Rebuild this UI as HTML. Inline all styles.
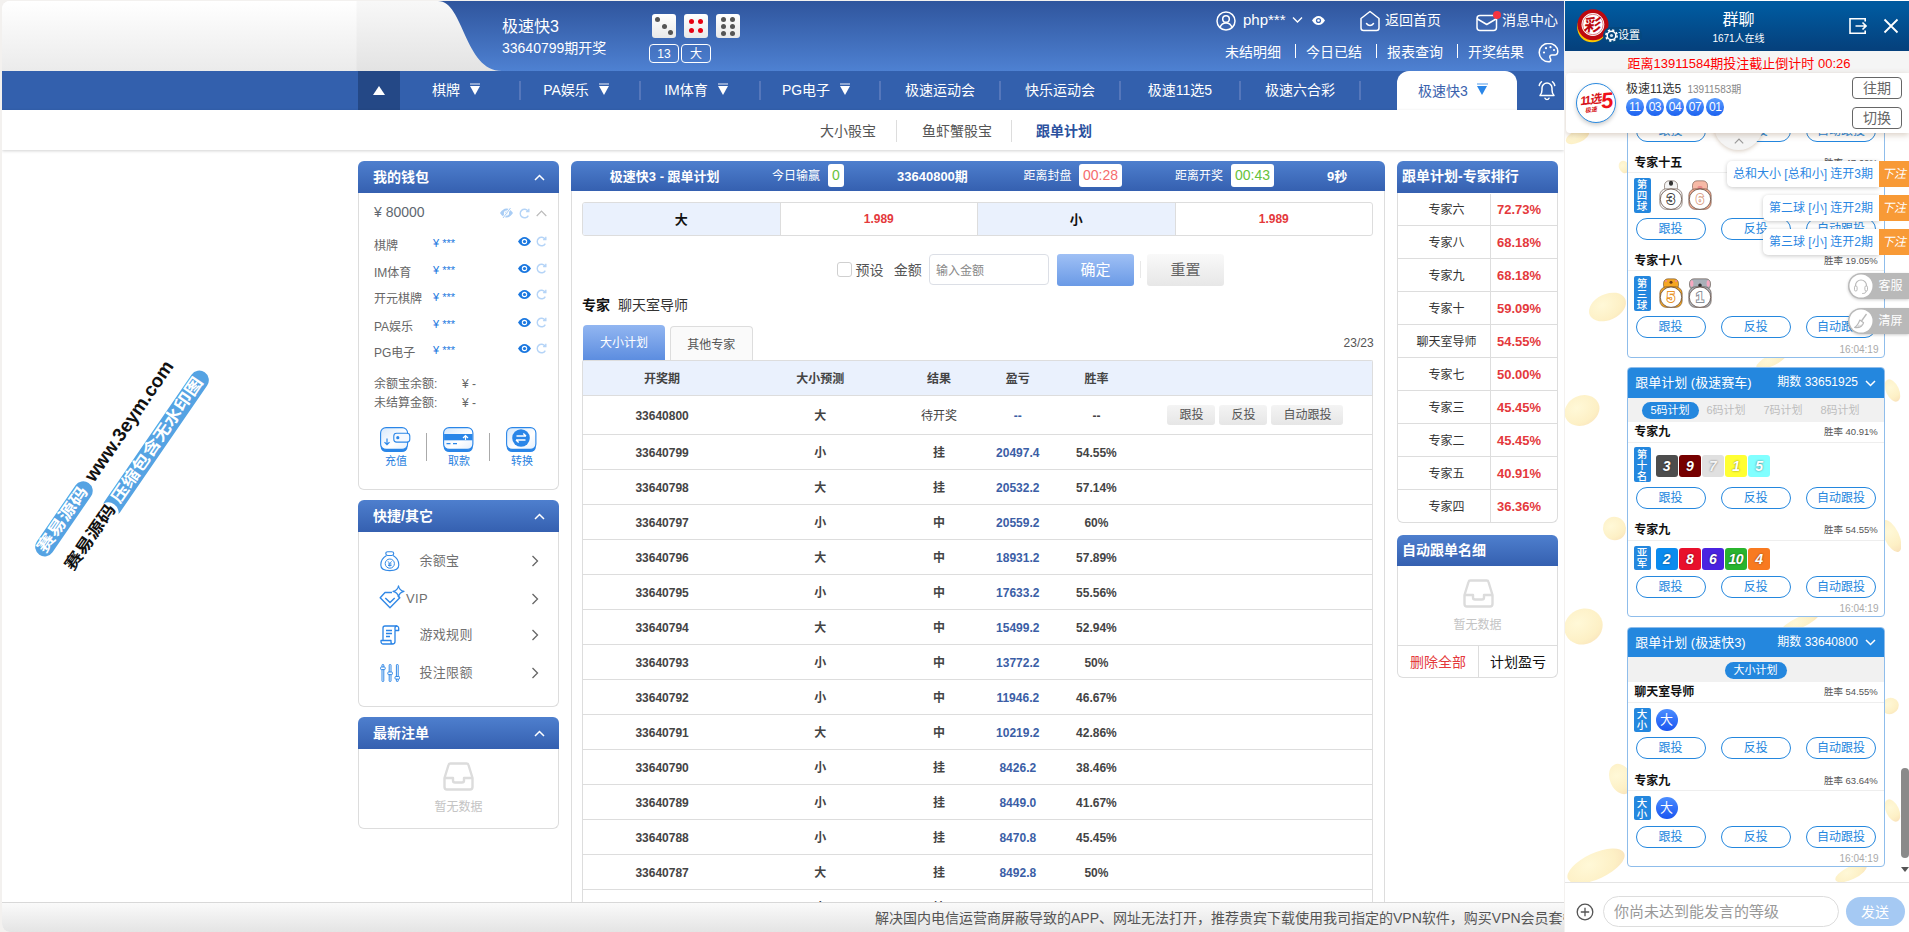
<!DOCTYPE html>
<html lang="zh-CN">
<head>
<meta charset="utf-8">
<title>极速快3 - 跟单计划</title>
<style>
*{box-sizing:border-box;margin:0;padding:0}
html,body{width:1909px;height:932px;overflow:hidden;background:#f3f1ef}
body{font-family:"Liberation Sans","Noto Sans CJK SC",sans-serif;font-size:12px;color:#333;position:relative}
.abs{position:absolute}
svg{display:block}
/* ---------- main frame ---------- */
#main{position:absolute;left:2px;top:1px;width:1562px;height:931px;background:#fff;border-radius:8px 0 0 8px;overflow:hidden}
#hdr{position:absolute;left:430px;top:0;width:1132px;height:70px;background:linear-gradient(#2f559d,#4e81d2)}
#hdrL{position:absolute;left:0;top:0;width:500px;height:70px}
#nav{position:absolute;left:0;top:70px;width:1562px;height:39px;background:#3360ad}
#nav .it{position:absolute;top:0;height:39px;width:120px;color:#fff;font-size:14px;line-height:39.500px;white-space:nowrap}
#nav .sep{position:absolute;top:10px;width:1.500px;height:19px;background:#5577bb}
.trn{display:block;position:relative;margin:14.500px 0 0 10px;width:0;height:0;border-left:5px solid transparent;border-right:5px solid transparent;border-top:9px solid #fff}
.trn:before{content:"";position:absolute;left:-5px;top:-11.5px;width:10px;height:2px;background:rgba(255,255,255,.45)}
.tri{position:absolute;top:13px;width:0;height:0;border-left:5.5px solid transparent;border-right:5.5px solid transparent;border-top:9px solid #fff}
.tri:before{content:"";position:absolute;left:-5.5px;top:-11.5px;width:11px;height:2px;background:rgba(255,255,255,.45)}
#subnav{position:absolute;left:0;top:109px;width:1562px;height:40px;background:#fff;box-shadow:0 1px 3px rgba(0,0,0,.18)}
#subnav span{position:absolute;top:0;line-height:42px;font-size:14px;color:#555;white-space:nowrap}
#subnav i{position:absolute;top:10px;width:1px;height:22px;background:#ddd}
#foot{position:absolute;left:0;top:901px;width:1562px;height:30px;background:linear-gradient(#fafafa,#e4e4e4);border-top:1px solid #d8d8d8;overflow:hidden}
#foot span{position:absolute;left:873px;top:0;line-height:31px;font-size:14px;color:#555;white-space:nowrap}
/* ---------- panels ---------- */
.ph{position:absolute;height:32px;background:linear-gradient(#4e7fce,#3560b0);border-radius:6px 6px 0 0;color:#fff;font-weight:bold;font-size:14px;line-height:32px;white-space:nowrap}
.pb{position:absolute;background:#fff;border:1px solid #ddd;border-top:0;border-radius:0 0 6px 6px}
/* ---------- chat ---------- */
#chat{position:absolute;left:1565px;top:0;width:344px;height:932px;background:#fff;overflow:hidden}

#chat{font-family:"Liberation Sans","Noto Sans CJK SC",sans-serif}
#chd{position:absolute;left:0;top:1px;width:344px;height:49.600px;background:linear-gradient(#005a9f 10%,#05417d 95%);color:#fff}
#ccd{position:absolute;left:0;top:50.600px;width:344px;height:22px;background:#f5f5f5;color:#f00;font-size:13px;line-height:25px;text-align:center;white-space:nowrap;padding-left:4px}
#clt{position:absolute;left:1px;top:73px;width:343px;height:60.400px;background:#fff;border-radius:4px 0 0 4px;box-shadow:0 2px 6px rgba(120,80,40,.28)}
.ball{position:absolute;top:25px;width:17.500px;height:17.500px;border-radius:50%;background:linear-gradient(#5c9dff,#1c62f0);color:#fff;font-size:12px;line-height:18.500px;text-align:center;letter-spacing:-.5px}
.cbtn{position:absolute;left:286px;width:50px;height:22px;border:1px solid #666;border-radius:4px;color:#666;font-size:14px;line-height:21px;text-align:center;background:#fff}
#cmsg{position:absolute;left:0;top:73px;width:344px;height:809px;overflow:hidden;background:#fff}
#cin{position:absolute;left:0;top:882px;width:344px;height:50px;background:#fff;border-top:1px solid #e4e4e4}
.coin{position:absolute;border-radius:50%;background:radial-gradient(circle at 40% 35%,#fff2b0,#fbe18c 62%,#f2c274);opacity:.5;transform:rotate(-25deg) scaleY(.72)}

.card{position:absolute;left:62px;width:258px;border:1px solid #8fbdeb;border-radius:4px;background:#fff;overflow:hidden}
.chh{height:29.600px;background:#2487de;color:#fff;font-size:13px;line-height:29.500px;position:relative;white-space:nowrap}
.cst{height:24.800px;background:#f1f1f1;position:relative;font-size:11px;white-space:nowrap}
.cst b{position:absolute;top:4.200px;height:17px;line-height:17.500px;border-radius:8.500px;background:#2487de;color:#fff;font-weight:normal;text-align:center}
.cst span{position:absolute;top:4.200px;line-height:17.500px;color:#bdbdbd}
.xn{height:20.300px;line-height:21.500px;border-bottom:1px solid #eee;position:relative;margin:0 0;font-size:12px;font-weight:bold;color:#111;padding-left:6.200px;white-space:nowrap}
.xn i{position:absolute;right:6.200px;top:0;line-height:20px;font-style:normal;font-weight:normal;font-size:9.500px;color:#555}
.xb{position:relative;margin-top:4.600px;display:flex;align-items:center;padding-left:5.500px;min-height:25.200px}
.xl{width:17px;background:#2487de;border-radius:2px;color:#fff;font-size:10.500px;font-weight:500;line-height:11px;text-align:center;padding:1.500px 0 .5px;margin-right:5px}
.xa{margin-top:5px;height:22px;display:flex;justify-content:space-between;padding:0 8px 0 7.500px;margin-bottom:11.200px}
.xa a{display:block;width:70px;height:22px;border:1px solid #2487de;border-radius:11px;color:#2487de;font-size:12px;line-height:20.500px;text-align:center}
.xt{text-align:right;font-size:10px;color:#aaa;line-height:12px;margin:-5.500px 5.500px 0 0;height:13px}
.sq{position:relative;top:1.300px;width:22px;height:22px;border-radius:3px;margin-right:1.100px;color:#fff;font-size:14px;font-weight:bold;font-style:italic;line-height:22px;text-align:center;text-shadow:0 0 2px rgba(0,0,0,.55);letter-spacing:-.5px}
.rb{width:22px;height:22px;border-radius:50%;background:linear-gradient(#4b8dff,#1a55f0);color:#fff;font-size:13px;line-height:22px;text-align:center}
.an{position:relative;margin-right:5.500px;left:3px;top:-.5px}
.an u{position:absolute;left:1px;top:7.500px;width:22px;height:21.500px;border-radius:50%;background:#fff;border:1.500px solid #e9a36e;text-decoration:none;font-size:13px;font-weight:bold;line-height:18.500px;text-align:center}
.an s{position:absolute;left:5px;top:0;width:14px;height:10px;border-radius:4px 4px 0 0;text-decoration:none}
.an em{position:absolute;width:6px;height:6px;border-radius:50%}
</style>
</head>
<body>
<div id="main">
  <div id="hdr"></div>
  <svg id="hdrL" viewBox="0 0 500 70">
    <defs><linearGradient id="gl" x1="0" y1="0" x2="0" y2="1"><stop offset="0" stop-color="#ffffff"/><stop offset="1" stop-color="#ebebeb"/></linearGradient><linearGradient id="gl2" x1="0" y1="0" x2="0" y2="1"><stop offset="0" stop-color="#f8f8f8"/><stop offset="1" stop-color="#e3e3e3"/></linearGradient></defs>
    <path d="M354 0H436C462 0 462 70 500 70H354Z" fill="url(#gl2)"/><rect x="0" y="0" width="354.500" height="70" fill="url(#gl)"/>
  </svg>
  
  <style>
  #hd span{position:absolute;color:#fff;white-space:nowrap;line-height:20px}
  .die{position:absolute;top:13px;width:24px;height:24px;border-radius:3px;background:linear-gradient(#fff,#e9e9e9)}
  .die b{position:absolute;width:5px;height:5px;border-radius:50%;background:#555}
  .hbox{position:absolute;top:43px;width:30px;height:19px;border:1px solid #fff;border-radius:4px;color:#fff;font-size:12px;line-height:19px;text-align:center}
  #hd .r2{top:41px;font-size:14px}
  #hd .vs{position:absolute;top:43px;width:1px;height:14px;background:#fff}
  </style>
  <div id="hd" class="abs" style="left:0;top:0;width:1562px;height:70px">
    <span style="left:500px;top:15.5px;font-size:16px">极速快3</span>
    <span style="left:500px;top:37px;font-size:14px">33640799期开奖</span>
    <div class="die" style="left:650px"><b style="left:3px;top:3px"></b><b style="left:9.5px;top:9.5px"></b><b style="left:16px;top:16px"></b></div>
    <div class="die" style="left:682px"><b style="left:5px;top:5px;background:#e60012"></b><b style="left:14px;top:5px;background:#e60012"></b><b style="left:5px;top:14px;background:#e60012"></b><b style="left:14px;top:14px;background:#e60012"></b></div>
    <div class="die" style="left:714px"><b style="left:5px;top:2.5px"></b><b style="left:14px;top:2.5px"></b><b style="left:5px;top:9.5px"></b><b style="left:14px;top:9.5px"></b><b style="left:5px;top:16.5px"></b><b style="left:14px;top:16.5px"></b></div>
    <div class="hbox" style="left:647px">13</div>
    <div class="hbox" style="left:679px">大</div>

    <svg class="abs" style="left:1214px;top:10px" width="20" height="20" viewBox="0 0 20 20" fill="none" stroke="#fff" stroke-width="1.5"><circle cx="10" cy="10" r="9"/><circle cx="10" cy="8" r="3.3"/><path d="M4 16.5c1-3.2 3.2-4.6 6-4.6s5 1.400 6 4.600"/></svg>
    <span style="left:1241px;top:9px;font-size:15px">php***</span>
    <svg class="abs" style="left:1290px;top:15px" width="11" height="8" viewBox="0 0 11 8" fill="none" stroke="#fff" stroke-width="1.4"><path d="M1 1.500l4.500 4.500l4.500-4.500"/></svg>
    <svg class="abs" style="left:1310px;top:15px" width="13" height="9" viewBox="0 0 13 9"><path d="M0 4.500C2 1.500 4 0 6.500 0S11 1.500 13 4.500C11 7.500 9 9 6.500 9S2 7.500 0 4.500Z" fill="#fff"/><circle cx="6.500" cy="4.500" r="2.600" fill="#3c68b5"/><circle cx="6.500" cy="4.500" r="1.300" fill="#fff"/></svg>
    <svg class="abs" style="left:1357px;top:9px" width="22" height="22" viewBox="0 0 22 22" fill="none" stroke="#fff" stroke-width="1.500" stroke-linejoin="round" stroke-linecap="round"><path d="M2 8.500L11 1.500l9 7v9.500a2.500 2.500 0 0 1-2.500 2.500h-13a2.500 2.500 0 0 1-2.500-2.500z"/><path d="M7.500 13.500c1.200 1.600 2.300 2 3.500 2s2.300-.4 3.500-2"/></svg>
    <span style="left:1383px;top:9px;font-size:14px">返回首页</span>
    <svg class="abs" style="left:1474px;top:13px" width="22" height="18" viewBox="0 0 22 18" fill="none" stroke="#fff" stroke-width="1.500" stroke-linejoin="round" stroke-linecap="round"><rect x="1" y="1.500" width="19.500" height="15" rx="3"/><path d="M1.500 5l9.250 5.500l9.250-5.500"/></svg>
    <div class="abs" style="left:1491px;top:9.5px;width:8px;height:8px;border-radius:50%;background:#f5333f"></div>
    <span style="left:1500px;top:9px;font-size:14px">消息中心</span>

    <span class="r2" style="left:1223px">未结明细</span><i class="vs" style="left:1293px"></i>
    <span class="r2" style="left:1304px">今日已结</span><i class="vs" style="left:1374px"></i>
    <span class="r2" style="left:1385px">报表查询</span><i class="vs" style="left:1455px"></i>
    <span class="r2" style="left:1466px">开奖结果</span>
    <svg class="abs" style="left:1536px;top:41px" width="21" height="21" viewBox="0 0 21 21" fill="none" stroke="#fff" stroke-width="1.500"><path d="M10.500 1.200a9.300 9.300 0 1 0 0 18.600c1.600 0 2.300-.9 2.300-1.900c0-1.300-1-1.700-1-2.900c0-1.100.9-1.900 2.100-1.900h2.300c2 0 3.600-1.500 3.600-3.900c0-4.300-4.200-8-9.300-8z"/><circle cx="6" cy="10.500" r="1.100" fill="#fff" stroke="none"/><circle cx="8" cy="6.200" r="1.100" fill="#fff" stroke="none"/><circle cx="12.500" cy="5.200" r="1.100" fill="#fff" stroke="none"/><circle cx="16" cy="8" r="1.100" fill="#fff" stroke="none"/></svg>
  </div>

  <div id="nav">
    <div class="abs" style="left:356px;top:0;width:42px;height:39px;background:#244886"><div class="abs" style="left:15px;top:15px;width:0;height:0;border-left:6px solid transparent;border-right:6px solid transparent;border-bottom:9px solid #fff"></div></div>
    <div class="it" style="left:398px;display:flex;justify-content:center;padding-right:8px">棋牌<b class="trn"></b></div>
<i class="sep" style="left:517px"></i>
<div class="it" style="left:518px;display:flex;justify-content:center;padding-right:8px">PA娱乐<b class="trn"></b></div>
<i class="sep" style="left:637px"></i>
<div class="it" style="left:638px;display:flex;justify-content:center;padding-right:8px">IM体育<b class="trn"></b></div>
<i class="sep" style="left:757px"></i>
<div class="it" style="left:758px;display:flex;justify-content:center;padding-right:8px">PG电子<b class="trn"></b></div>
<i class="sep" style="left:877px"></i>
<div class="it" style="left:878px;text-align:center">极速运动会</div>
<i class="sep" style="left:997px"></i>
<div class="it" style="left:998px;text-align:center">快乐运动会</div>
<i class="sep" style="left:1117px"></i>
<div class="it" style="left:1118px;text-align:center">极速11选5</div>
<i class="sep" style="left:1237px"></i>
<div class="it" style="left:1238px;text-align:center">极速六合彩</div>
<i class="sep" style="left:1357px"></i>
<div class="abs" style="left:1395px;top:0;width:120px;height:39px;background:#fff;border-radius:12px 12px 0 0;color:#3a62ad;font-size:14px;line-height:40.500px"><span class="abs" style="left:21px;white-space:nowrap">极速快3</span><div class="tri" style="left:80px;top:14.500px;border-top-color:#2a86e8"></div><i class="abs" style="left:80px;top:12px;width:11px;height:2px;background:#a8cdf5"></i></div>
<svg class="abs" style="left:1534px;top:8px" width="22" height="22" viewBox="0 0 22 22" fill="none" stroke="#fff" stroke-width="1.500" stroke-linecap="round"><path d="M4 16.500h14c-1.500-1.500-2-3-2-5.500v-2a5 5 0 0 0-10 0v2c0 2.500-.5 4-2 5.500z" stroke-linejoin="round"/><path d="M9 19.200a2.200 2.200 0 0 0 4 0"/><path d="M3.200 6.500a7 7 0 0 1 2.300-3.700M18.800 6.500a7 7 0 0 0-2.300-3.700"/></svg>

  </div>
  <div id="subnav">
    <span style="left:818px">大小骰宝</span><i style="left:894px"></i>
    <span style="left:920px">鱼虾蟹骰宝</span><i style="left:1009px"></i>
    <span style="left:1034px;color:#2b519e;font-weight:bold">跟单计划</span>
  </div>
  
  <style>
  .wl{position:absolute;left:15px;font-size:12px;color:#666;line-height:18px;white-space:nowrap}
  .wv{position:absolute;left:74px;font-size:11px;color:#1b78e0;line-height:18px;white-space:nowrap}
  .qk{position:absolute;left:60.500px;font-size:13px;color:#707070;line-height:20px;white-space:nowrap;letter-spacing:.3px}
  .btl{position:absolute;top:258.500px;font-size:11px;color:#2a7fe0;line-height:18px;width:40px;text-align:center}
  </style>
  <div class="ph" style="left:356px;top:160px;width:201px;padding-left:15px">我的钱包<svg class="abs" style="left:176px;top:13px" width="11" height="7" viewBox="0 0 11 7" fill="none" stroke="#fff" stroke-width="1.500"><path d="M1 6l4.500-4.500l4.500 4.500"/></svg></div>
  <div class="pb" style="left:356px;top:192px;width:201px;height:297px">
    <span class="abs" style="left:15px;top:8.500px;font-size:14px;color:#606770;line-height:20px">¥ 80000</span>
    <svg class="abs" style="left:141px;top:15px" width="13" height="10" viewBox="0 0 13 10"><path d="M0 5C2 2 4 .5 6.500 .5S11 2 13 5C11 8 9 9.500 6.500 9.500S2 8 0 5Z" fill="#a9cdf5"/><circle cx="6.500" cy="5" r="2.600" fill="#fff"/><circle cx="6.500" cy="5" r="1.400" fill="#a9cdf5"/><path d="M10.500 0L3 10" stroke="#fff" stroke-width="2.200"/><path d="M10.500 0L3 10" stroke="#a9cdf5" stroke-width="1"/></svg>
    <svg class="abs" style="left:160px;top:14.5px" width="11" height="11" viewBox="0 0 11 11" fill="none" stroke="#b5d4f7" stroke-width="1.400"><path d="M9.300 7.600a4.300 4.300 0 1 1-.2-4.500"/><path d="M9.800 .8v2.700h-2.700"/></svg>
    <svg class="abs" style="left:177px;top:17px" width="11" height="7" viewBox="0 0 11 7" fill="none" stroke="#bbb" stroke-width="1.200"><path d="M.7 6l4.800-4.800l4.800 4.800"/></svg>
    <span class="wl" style="top:43.6px">棋牌</span><span class="wv" style="top:41.1px">¥ ***</span><svg class="abs" style="left:158.500px;top:43.6px" width="13" height="9" viewBox="0 0 13 9"><path d="M0 4.500C2 1.500 4 0 6.500 0S11 1.500 13 4.500C11 7.500 9 9 6.500 9S2 7.500 0 4.500Z" fill="#1b78e0"/><circle cx="6.500" cy="4.500" r="2.700" fill="#fff"/><circle cx="6.500" cy="4.500" r="1.600" fill="#1b78e0"/></svg><svg class="abs" style="left:176.500px;top:42.6px" width="11" height="11" viewBox="0 0 11 11" fill="none" stroke="#b5d4f7" stroke-width="1.400"><path d="M9.300 7.600a4.300 4.300 0 1 1-.2-4.500"/><path d="M9.800 .8v2.700h-2.700"/></svg>
<span class="wl" style="top:70.6px">IM体育</span><span class="wv" style="top:68.1px">¥ ***</span><svg class="abs" style="left:158.500px;top:70.6px" width="13" height="9" viewBox="0 0 13 9"><path d="M0 4.500C2 1.500 4 0 6.500 0S11 1.500 13 4.500C11 7.500 9 9 6.500 9S2 7.500 0 4.500Z" fill="#1b78e0"/><circle cx="6.500" cy="4.500" r="2.700" fill="#fff"/><circle cx="6.500" cy="4.500" r="1.600" fill="#1b78e0"/></svg><svg class="abs" style="left:176.500px;top:69.6px" width="11" height="11" viewBox="0 0 11 11" fill="none" stroke="#b5d4f7" stroke-width="1.400"><path d="M9.300 7.600a4.300 4.300 0 1 1-.2-4.500"/><path d="M9.800 .8v2.700h-2.700"/></svg>
<span class="wl" style="top:97.4px">开元棋牌</span><span class="wv" style="top:94.9px">¥ ***</span><svg class="abs" style="left:158.500px;top:97.4px" width="13" height="9" viewBox="0 0 13 9"><path d="M0 4.500C2 1.500 4 0 6.500 0S11 1.500 13 4.500C11 7.500 9 9 6.500 9S2 7.500 0 4.500Z" fill="#1b78e0"/><circle cx="6.500" cy="4.500" r="2.700" fill="#fff"/><circle cx="6.500" cy="4.500" r="1.600" fill="#1b78e0"/></svg><svg class="abs" style="left:176.500px;top:96.4px" width="11" height="11" viewBox="0 0 11 11" fill="none" stroke="#b5d4f7" stroke-width="1.400"><path d="M9.300 7.600a4.300 4.300 0 1 1-.2-4.500"/><path d="M9.800 .8v2.700h-2.700"/></svg>
<span class="wl" style="top:124.5px">PA娱乐</span><span class="wv" style="top:122.0px">¥ ***</span><svg class="abs" style="left:158.500px;top:124.5px" width="13" height="9" viewBox="0 0 13 9"><path d="M0 4.500C2 1.500 4 0 6.500 0S11 1.500 13 4.500C11 7.500 9 9 6.500 9S2 7.500 0 4.500Z" fill="#1b78e0"/><circle cx="6.500" cy="4.500" r="2.700" fill="#fff"/><circle cx="6.500" cy="4.500" r="1.600" fill="#1b78e0"/></svg><svg class="abs" style="left:176.500px;top:123.5px" width="11" height="11" viewBox="0 0 11 11" fill="none" stroke="#b5d4f7" stroke-width="1.400"><path d="M9.300 7.600a4.300 4.300 0 1 1-.2-4.500"/><path d="M9.800 .8v2.700h-2.700"/></svg>
<span class="wl" style="top:150.6px">PG电子</span><span class="wv" style="top:148.1px">¥ ***</span><svg class="abs" style="left:158.500px;top:150.6px" width="13" height="9" viewBox="0 0 13 9"><path d="M0 4.500C2 1.500 4 0 6.500 0S11 1.500 13 4.500C11 7.500 9 9 6.500 9S2 7.500 0 4.500Z" fill="#1b78e0"/><circle cx="6.500" cy="4.500" r="2.700" fill="#fff"/><circle cx="6.500" cy="4.500" r="1.600" fill="#1b78e0"/></svg><svg class="abs" style="left:176.500px;top:149.6px" width="11" height="11" viewBox="0 0 11 11" fill="none" stroke="#b5d4f7" stroke-width="1.400"><path d="M9.300 7.600a4.300 4.300 0 1 1-.2-4.500"/><path d="M9.800 .8v2.700h-2.700"/></svg>

    <span class="wl" style="top:182px">余额宝余额:</span><span class="wl" style="left:103px;top:182px">¥ -</span>
    <span class="wl" style="top:201px">未结算金额:</span><span class="wl" style="left:103px;top:201px">¥ -</span>
    <!-- 充值 -->
    <svg class="abs" style="left:21px;top:234px" width="31" height="26" viewBox="0 0 31 26"><defs><linearGradient id="ig" x1="0" y1="0" x2="1" y2="1"><stop offset="0" stop-color="#d6e8fc"/><stop offset=".6" stop-color="#ffffff"/><stop offset="1" stop-color="#e3effd"/></linearGradient></defs><rect x=".6" y="2.600" width="27" height="22.400" rx="5.500" fill="#2a86e8"/><rect x=".6" y=".6" width="27" height="21.800" rx="5.500" fill="url(#ig)" stroke="#2a86e8" stroke-width="1.100"/><rect x="13.800" y="6.300" width="16" height="8.800" rx="2.800" fill="#f4f9ff" stroke="#2a86e8" stroke-width="1.100"/><circle cx="17.800" cy="10.700" r="1.600" fill="#2a86e8"/><path d="M7 11.500v6M4.500 15.200l2.500 2.500l2.500-2.500" fill="none" stroke="#2a86e8" stroke-width="1.200"/></svg>
    <span class="btl" style="left:17px">充值</span>
    <i class="abs" style="left:67px;top:240px;width:1px;height:28px;background:#aaa"></i>
    <!-- 取款 -->
    <svg class="abs" style="left:84px;top:234px" width="31" height="26" viewBox="0 0 31 26"><rect x=".6" y="2.600" width="29.300" height="22.400" rx="5.500" fill="#2a86e8"/><rect x=".6" y=".6" width="29.300" height="21.800" rx="5.500" fill="url(#ig)" stroke="#2a86e8" stroke-width="1.100"/><rect x="1.100" y="7" width="28.300" height="6.300" fill="#2a86e8"/><path d="M3.500 16.600h4M10 16.600h4" stroke="#2a86e8" stroke-width="1.400"/><path d="M22.500 13v-4M20 11l2.500-2.500l2.500 2.500" fill="none" stroke="#fff" stroke-width="1.200"/></svg>
    <span class="btl" style="left:80px">取款</span>
    <i class="abs" style="left:130.300px;top:240px;width:1px;height:28px;background:#aaa"></i>
    <!-- 转换 -->
    <svg class="abs" style="left:147px;top:234px" width="31" height="26" viewBox="0 0 31 26"><rect x=".6" y="2.600" width="29.300" height="22.400" rx="5.500" fill="#2a86e8"/><rect x=".6" y=".6" width="29.300" height="21.800" rx="5.500" fill="url(#ig)" stroke="#2a86e8" stroke-width="1.100"/><circle cx="15" cy="11" r="8.800" fill="#2a86e8"/><path d="M10.500 9h9.500M17.300 6.500l2.700 2.500M19.500 13h-9.500M12.700 15.500l-2.700-2.500" fill="none" stroke="#fff" stroke-width="1.400"/></svg>
    <span class="btl" style="left:143px">转换</span>
  </div>

  <div class="ph" style="left:356px;top:499px;width:201px;padding-left:15px">快捷/其它<svg class="abs" style="left:176px;top:13px" width="11" height="7" viewBox="0 0 11 7" fill="none" stroke="#fff" stroke-width="1.500"><path d="M1 6l4.500-4.500l4.500 4.500"/></svg></div>
  <div class="pb" style="left:356px;top:531px;width:201px;height:175px">
    
    <svg class="abs" style="left:21px;top:18.500px" width="20" height="21" viewBox="0 0 20 21" fill="none" stroke="#3289e6" stroke-width="1.150" stroke-linejoin="round"><rect x="5.800" y=".7" width="7.900" height="3.800" rx="1.900"/><path d="M6.500 4.600C3.200 6.500 .8 10.200 .8 14c0 3.600 3 5.600 9 5.600s9-2 9-5.600c0-3.800-2.400-7.500-5.700-9.400"/><circle cx="9.800" cy="12.600" r="4.600" stroke-width="1"/><path d="M8 10.300l1.800 2.300l1.800-2.300M9.800 12.600v3M8 13h3.600M8 14.500h3.600" stroke-width=".9"/></svg>
    <span class="qk" style="top:19px">余额宝</span><svg class="abs" style="left:172px;top:23px" width="8" height="12" viewBox="0 0 8 12" fill="none" stroke="#666" stroke-width="1.300"><path d="M1.500 1l5 5l-5 5"/></svg>
    <svg class="abs" style="left:20px;top:52.500px" width="27" height="26" viewBox="0 0 27 26" fill="none" stroke="#3289e6" stroke-width="1.400" stroke-linejoin="round"><path d="M13 7.500h-7l-4.800 5.300l9.800 10l9.800-10l-1.800-2"/><path d="M6.300 13l4.700 4.500l4.700-4.500" stroke-width="1.500"/><path d="M19.500 .8c.6 3.400 1.900 4.800 5.500 5.500c-3.600.7-4.900 2.100-5.500 5.500c-.6-3.400-1.900-4.800-5.500-5.500c3.600-.7 4.900-2.100 5.500-5.500z" fill="#fff" stroke-width="1.200"/></svg>
    <span class="qk" style="left:47px;top:56.500px">VIP</span><svg class="abs" style="left:172px;top:60.5px" width="8" height="12" viewBox="0 0 8 12" fill="none" stroke="#666" stroke-width="1.300"><path d="M1.500 1l5 5l-5 5"/></svg>
    <svg class="abs" style="left:21px;top:93px" width="20" height="20" viewBox="0 0 20 20" fill="none" stroke="#2a84e6" stroke-width="1.300" stroke-linejoin="round"><path d="M5 1h11.500a2.200 2.200 0 0 1 2.200 2.200v2.300h-3.700"/><path d="M15 5.500v-2.500a2 2 0 0 1 2-2M5 1a2 2 0 0 0-2 2v12.500"/><path d="M15 5.500v11a2.500 2.500 0 0 1-2.500 2.500h-9.300a2.200 2.200 0 0 1-2.200-2.200v-1.300h10v1.500a2 2 0 0 0 2 2"/><path d="M6 5.500h6M6 8.500h6M6 11.500h4" stroke-width="1.400"/></svg>
    <span class="qk" style="top:93px">游戏规则</span><svg class="abs" style="left:172px;top:97px" width="8" height="12" viewBox="0 0 8 12" fill="none" stroke="#666" stroke-width="1.300"><path d="M1.500 1l5 5l-5 5"/></svg>
    <svg class="abs" style="left:21px;top:132px" width="20" height="18" viewBox="0 0 20 18" fill="none" stroke="#3289e6" stroke-width="1"><rect x="2" y=".5" width="1.800" height="17" rx=".6"/><rect x="9.200" y=".5" width="1.800" height="17" rx=".6"/><rect x="16.400" y=".5" width="1.800" height="17" rx=".6"/><rect x=".6" y="3" width="4.600" height="2.600" rx=".8" fill="#fff"/><rect x="7.800" y="8" width="4.600" height="2.600" rx=".8" fill="#fff"/><rect x="15" y="12.500" width="4.600" height="2.600" rx=".8" fill="#fff"/></svg>
    <span class="qk" style="top:130.500px">投注限额</span><svg class="abs" style="left:172px;top:134.5px" width="8" height="12" viewBox="0 0 8 12" fill="none" stroke="#666" stroke-width="1.300"><path d="M1.500 1l5 5l-5 5"/></svg>

  </div>

  <div class="ph" style="left:356px;top:716px;width:201px;padding-left:15px">最新注单<svg class="abs" style="left:176px;top:13px" width="11" height="7" viewBox="0 0 11 7" fill="none" stroke="#fff" stroke-width="1.500"><path d="M1 6l4.500-4.500l4.500 4.500"/></svg></div>
  <div class="pb" style="left:356px;top:748px;width:201px;height:80px">
    <svg class="abs" style="left:84px;top:13px" width="31" height="29" viewBox="0 0 31 29" fill="none" stroke="#dcdcdc" stroke-width="2.400" stroke-linejoin="round"><path d="M1.500 16l4-13a2 2 0 0 1 2-1.500h16a2 2 0 0 1 2 1.500l4 13v9a2.500 2.500 0 0 1-2.500 2.500h-23a2.500 2.500 0 0 1-2.500-2.500z"/><path d="M1.500 16h8.500v2.500a2 2 0 0 0 2 2h7a2 2 0 0 0 2-2v-2.500h8.500"/></svg>
    <span class="abs" style="left:0;top:49px;width:199px;text-align:center;color:#c4c4c4;font-size:12px;line-height:18px">暂无数据</span>
  </div>

  
  <style>
  #ct span.h{position:absolute;top:0;line-height:31px;white-space:nowrap;color:#fff;font-size:12px}
  #ct .hb{position:absolute;top:3px;height:23px;background:#fff;border-radius:3px;font-size:14px;line-height:23px;text-align:center}
  .odd{position:absolute;left:11px;top:41.400px;width:791px;height:34px;border:1px solid #ddd;border-radius:3px;display:flex;overflow:hidden}
  .odd div{flex:1;text-align:center;line-height:33px;font-weight:bold;font-size:13px;border-right:1px solid #ddd}
  .odd div:last-child{border-right:0}
  .odd .k{background:#eaf1fd;color:#111} .odd .v{color:#e4393c;font-size:12px}
  .tr{position:relative;border-bottom:1px solid #ddd;font-size:12px;font-weight:bold;color:#444}
  .tr span{position:absolute;top:1px;width:100px;text-align:center;white-space:nowrap}
  .tr .c3{color:#3b5ea6}
  .tbtn{position:absolute;top:9.500px;height:20px;line-height:20px;background:linear-gradient(#f4f4f4,#e6e6e6);border-radius:3px;color:#555;font-weight:normal;text-align:center;font-size:12px}
  </style>
  <div id="ct" class="abs" style="left:569px;top:160px;width:814px;height:741px">
    <div class="ph" style="left:0;top:0;width:814px;height:30px"></div>
    <span class="h" style="left:38.800px;font-size:13px;font-weight:bold">极速快3 - 跟单计划</span>
    <span class="h" style="left:201px">今日输赢</span><div class="hb" style="left:257px;width:16px;color:#67c23a">0</div>
    <span class="h" style="left:326px;font-size:13px;font-weight:bold">33640800期</span>
    <span class="h" style="left:452.500px">距离封盘</span><div class="hb" style="left:508px;width:43px;color:#f56c6c">00:28</div>
    <span class="h" style="left:604px">距离开奖</span><div class="hb" style="left:660px;width:43px;color:#67c23a">00:43</div>
    <span class="h" style="left:756px;font-size:13px;font-weight:bold">9秒</span>
    <div class="abs" style="left:0;top:30px;width:814px;height:711px;border-left:1px solid #ddd;border-right:1px solid #ddd;background:#fff"></div>
    <div class="odd"><div class="k">大</div><div class="v">1.989</div><div class="k">小</div><div class="v">1.989</div></div>
    <div class="abs" style="left:266px;top:101px;width:15px;height:15px;border:1px solid #d0d0d0;border-radius:3px;background:#fff"></div>
    <span class="abs" style="left:284.500px;top:98px;font-size:14px;color:#555;line-height:22px">预设</span>
    <span class="abs" style="left:322.700px;top:98px;font-size:14px;color:#555;line-height:22px">金额</span>
    <div class="abs" style="left:358px;top:92.700px;width:119.600px;height:31.600px;border:1px solid #dcdfe6;border-radius:4px;padding-left:6px;font-size:12px;color:#888;line-height:32px">输入金额</div>
    <div class="abs" style="left:486px;top:92.700px;width:77px;height:32px;border-radius:3px;background:linear-gradient(#9fc0f5,#6a9ae6);color:#fff;font-size:15px;line-height:32px;text-align:center">确定</div>
    <i class="abs" style="left:569px;top:100px;width:1px;height:17px;background:#e8e8e8"></i>
    <div class="abs" style="left:576px;top:92.700px;width:77px;height:32px;border-radius:3px;background:linear-gradient(#f9f9f9,#e7e7e7);color:#666;font-size:15px;line-height:32px;text-align:center">重置</div>
    <span class="abs" style="left:11px;top:133px;font-size:14px;font-weight:bold;color:#111;line-height:22px">专家</span>
    <span class="abs" style="left:47px;top:133px;font-size:14px;color:#333;line-height:22px">聊天室导师</span>
    <div class="abs" style="left:11.500px;top:164.300px;width:82.800px;height:36px;border-radius:4px 4px 0 0;background:linear-gradient(#92b6f1,#5b8cdf);color:#fff;font-size:12px;line-height:37px;text-align:center">大小计划</div>
    <div class="abs" style="left:98.500px;top:164.500px;width:83.500px;height:36px;border-radius:4px 4px 0 0;border:1px solid #ddd;border-bottom:0;background:#fafafa;color:#555;font-size:12px;line-height:36px;text-align:center">其他专家</div>
    <span class="abs" style="left:702.600px;top:171px;width:100px;text-align:right;font-size:12px;color:#555;line-height:22px">23/23</span>
    <div class="abs" style="left:11px;top:199.200px;width:791px;border:1px solid #ddd;border-bottom:0;border-radius:2px 2px 0 0">
      <div class="tr" style="height:34.800px;line-height:34px;background:#eaf1fd"><span class="c0" style="left:29.1px">开奖期</span><span style="left:187.2px">大小预测</span><span style="left:306.0px">结果</span><span style="left:384.8px">盈亏</span><span style="left:463.4px">胜率</span></div>
      <div class="tr" style="height:39px;line-height:39px"><span class="c0" style="left:29.1px">33640800</span><span class="c1" style="left:187.2px">大</span><span class="c2" style="left:306.0px;font-weight:normal">待开奖</span><span class="c3" style="left:384.8px">--</span><span class="c4" style="left:463.4px">--</span><a class="tbtn" style="left:584.4px;width:48px">跟投</a><a class="tbtn" style="left:636.4px;width:48px">反投</a><a class="tbtn" style="left:688.4px;width:72px">自动跟投</a></div>
<div class="tr" style="height:35px;line-height:35px"><span class="c0" style="left:29.1px">33640799</span><span class="c1" style="left:187.2px">小</span><span class="c2" style="left:306.0px">挂</span><span class="c3" style="left:384.8px">20497.4</span><span class="c4" style="left:463.4px">54.55%</span></div>
<div class="tr" style="height:35px;line-height:35px"><span class="c0" style="left:29.1px">33640798</span><span class="c1" style="left:187.2px">大</span><span class="c2" style="left:306.0px">挂</span><span class="c3" style="left:384.8px">20532.2</span><span class="c4" style="left:463.4px">57.14%</span></div>
<div class="tr" style="height:35px;line-height:35px"><span class="c0" style="left:29.1px">33640797</span><span class="c1" style="left:187.2px">小</span><span class="c2" style="left:306.0px">中</span><span class="c3" style="left:384.8px">20559.2</span><span class="c4" style="left:463.4px">60%</span></div>
<div class="tr" style="height:35px;line-height:35px"><span class="c0" style="left:29.1px">33640796</span><span class="c1" style="left:187.2px">大</span><span class="c2" style="left:306.0px">中</span><span class="c3" style="left:384.8px">18931.2</span><span class="c4" style="left:463.4px">57.89%</span></div>
<div class="tr" style="height:35px;line-height:35px"><span class="c0" style="left:29.1px">33640795</span><span class="c1" style="left:187.2px">小</span><span class="c2" style="left:306.0px">中</span><span class="c3" style="left:384.8px">17633.2</span><span class="c4" style="left:463.4px">55.56%</span></div>
<div class="tr" style="height:35px;line-height:35px"><span class="c0" style="left:29.1px">33640794</span><span class="c1" style="left:187.2px">大</span><span class="c2" style="left:306.0px">中</span><span class="c3" style="left:384.8px">15499.2</span><span class="c4" style="left:463.4px">52.94%</span></div>
<div class="tr" style="height:35px;line-height:35px"><span class="c0" style="left:29.1px">33640793</span><span class="c1" style="left:187.2px">小</span><span class="c2" style="left:306.0px">中</span><span class="c3" style="left:384.8px">13772.2</span><span class="c4" style="left:463.4px">50%</span></div>
<div class="tr" style="height:35px;line-height:35px"><span class="c0" style="left:29.1px">33640792</span><span class="c1" style="left:187.2px">小</span><span class="c2" style="left:306.0px">中</span><span class="c3" style="left:384.8px">11946.2</span><span class="c4" style="left:463.4px">46.67%</span></div>
<div class="tr" style="height:35px;line-height:35px"><span class="c0" style="left:29.1px">33640791</span><span class="c1" style="left:187.2px">大</span><span class="c2" style="left:306.0px">中</span><span class="c3" style="left:384.8px">10219.2</span><span class="c4" style="left:463.4px">42.86%</span></div>
<div class="tr" style="height:35px;line-height:35px"><span class="c0" style="left:29.1px">33640790</span><span class="c1" style="left:187.2px">小</span><span class="c2" style="left:306.0px">挂</span><span class="c3" style="left:384.8px">8426.2</span><span class="c4" style="left:463.4px">38.46%</span></div>
<div class="tr" style="height:35px;line-height:35px"><span class="c0" style="left:29.1px">33640789</span><span class="c1" style="left:187.2px">小</span><span class="c2" style="left:306.0px">挂</span><span class="c3" style="left:384.8px">8449.0</span><span class="c4" style="left:463.4px">41.67%</span></div>
<div class="tr" style="height:35px;line-height:35px"><span class="c0" style="left:29.1px">33640788</span><span class="c1" style="left:187.2px">小</span><span class="c2" style="left:306.0px">挂</span><span class="c3" style="left:384.8px">8470.8</span><span class="c4" style="left:463.4px">45.45%</span></div>
<div class="tr" style="height:35px;line-height:35px"><span class="c0" style="left:29.1px">33640787</span><span class="c1" style="left:187.2px">大</span><span class="c2" style="left:306.0px">挂</span><span class="c3" style="left:384.8px">8492.8</span><span class="c4" style="left:463.4px">50%</span></div>
<div class="tr" style="height:35px;line-height:35px"><span class="c0" style="left:29.1px">33640786</span><span class="c1" style="left:187.2px">小</span><span class="c2" style="left:306.0px">挂</span><span class="c3" style="left:384.8px">8514.6</span><span class="c4" style="left:463.4px">53.85%</span></div>
<div class="tr" style="height:35px;line-height:35px"><span class="c0" style="left:29.1px">33640785</span><span class="c1" style="left:187.2px">大</span><span class="c2" style="left:306.0px">中</span><span class="c3" style="left:384.8px">8536.4</span><span class="c4" style="left:463.4px">58.33%</span></div>

    </div>
  </div>

  
  <style>
  .er{height:33px;line-height:33px;border-bottom:1px solid #ddd;position:relative}
  .er:last-child{border-bottom:0}
  .en{position:absolute;left:0;top:1px;padding-left:5px;width:93px;text-align:center;font-size:12px;color:#333;border-right:1px solid #ddd;height:33px}
  .ep{position:absolute;left:99px;top:0;font-size:13px;font-weight:bold;color:#e4393c}
  </style>
  <div class="ph" style="left:1395px;top:160px;width:161px;height:31.600px;line-height:31.600px;padding-left:5px">跟单计划-专家排行</div>
  <div class="pb" style="left:1395px;top:191.600px;width:161px;height:330.400px;overflow:hidden"><div class="er"><span class="en">专家六</span><span class="ep">72.73%</span></div><div class="er"><span class="en">专家八</span><span class="ep">68.18%</span></div><div class="er"><span class="en">专家九</span><span class="ep">68.18%</span></div><div class="er"><span class="en">专家十</span><span class="ep">59.09%</span></div><div class="er"><span class="en">聊天室导师</span><span class="ep">54.55%</span></div><div class="er"><span class="en">专家七</span><span class="ep">50.00%</span></div><div class="er"><span class="en">专家三</span><span class="ep">45.45%</span></div><div class="er"><span class="en">专家二</span><span class="ep">45.45%</span></div><div class="er"><span class="en">专家五</span><span class="ep">40.91%</span></div><div class="er"><span class="en">专家四</span><span class="ep">36.36%</span></div></div>
  <div class="ph" style="left:1395px;top:534px;width:161px;height:31px;line-height:31px;padding-left:5px">自动跟单名细</div>
  <div class="pb" style="left:1395px;top:565px;width:161px;height:112px;overflow:hidden">
    <svg class="abs" style="left:65px;top:13px" width="31" height="29" viewBox="0 0 31 29" fill="none" stroke="#dcdcdc" stroke-width="2.400" stroke-linejoin="round"><path d="M1.500 16l4-13a2 2 0 0 1 2-1.500h16a2 2 0 0 1 2 1.500l4 13v9a2.500 2.500 0 0 1-2.500 2.500h-23a2.500 2.500 0 0 1-2.500-2.500z"/><path d="M1.500 16h8.500v2.500a2 2 0 0 0 2 2h7a2 2 0 0 0 2-2v-2.500h8.500"/></svg>
    <span class="abs" style="left:0;top:49.500px;width:159px;text-align:center;color:#c4c4c4;font-size:12px;line-height:18px">暂无数据</span>
    <div class="abs" style="left:0;top:79px;width:159px;height:33px;border-top:1px solid #ddd"></div>
    <i class="abs" style="left:79.500px;top:79px;width:1px;height:33px;background:#ddd"></i>
    <span class="abs" style="left:0;top:80px;width:80px;text-align:center;font-size:14px;color:#e4393c;line-height:32px">删除全部</span>
    <span class="abs" style="left:80px;top:80px;width:80px;text-align:center;font-size:14px;color:#111;line-height:32px">计划盈亏</span>
  </div>

  
  <div class="abs" style="left:42.400px;top:545.900px;width:0;height:0;transform:rotate(-55.500deg);transform-origin:0 0;font-weight:bold;white-space:nowrap">
    <div class="abs" style="left:-9.500px;top:-9.500px;width:87px;height:19px;border-radius:9.500px;background:#55a3e3"></div>
    <span class="abs" style="left:-5.500px;top:-11px;line-height:22px;font-size:16px;color:#fff;transform:scaleX(1.19);transform-origin:0 50%">赛易源码</span>
    <span class="abs" style="left:81px;top:-13px;line-height:24px;font-size:19px;color:#111">www.3eym.com</span>
    <div class="abs" style="left:62px;top:23.500px;width:173px;height:19px;border-radius:9.500px;background:#55a3e3"></div>
    <div class="abs" style="left:-12px;top:22.500px;width:87px;height:21px;border-radius:10.500px;background:#fff"></div>
    <span class="abs" style="left:-4px;top:22px;line-height:22px;font-size:16px;color:#111;transform:scaleX(1.19);transform-origin:0 50%">赛易源码</span>
    <span class="abs" style="left:78px;top:22px;line-height:22px;font-size:16px;color:#fff;transform:scaleX(1.16);transform-origin:0 50%">压缩包含无水印图</span>
  </div>

  <div id="foot"><span>解决国内电信运营商屏蔽导致的APP、网址无法打开，推荐贵宾下载使用我司指定的VPN软件，购买VPN会员套餐享受更多优惠</span></div>
</div>
<div id="chat">
  
  <div id="cmsg">
    <i class="coin" style="left:23px;top:216px;width:39px;height:36px"></i><i class="coin" style="left:54px;top:85px;width:10px;height:18px"></i><i class="coin" style="left:-1px;top:317px;width:36px;height:41px"></i><i class="coin" style="left:38px;top:439px;width:23px;height:33px"></i><i class="coin" style="left:-1px;top:529px;width:39px;height:49px"></i><i class="coin" style="left:45px;top:684px;width:22px;height:44px"></i><i class="coin" style="left:0px;top:775px;width:62px;height:36px"></i><i class="coin" style="left:321px;top:301px;width:13px;height:33px"></i><i class="coin" style="left:319px;top:439px;width:15px;height:48px"></i><i class="coin" style="left:316px;top:622px;width:18px;height:22px"></i><i class="coin" style="left:321px;top:721px;width:13px;height:33px"></i><i class="coin" style="left:190px;top:280px;width:33px;height:15px"></i><i class="coin" style="left:214px;top:542px;width:42px;height:15px"></i><i class="coin" style="left:269px;top:791px;width:34px;height:18px"></i><i class="coin" style="left:0px;top:55px;width:25px;height:17px"></i><i class="coin" style="left:135px;top:55px;width:90px;height:22px"></i>
    <div class="card" style="top:-19px"><div class="xn">专家十二<i>胜率 52.38%</i></div><div class="xb"><div class="xl">第<br>一<br>球</div><svg class="an" width="24" height="30" viewBox="0 0 24 30"><rect x="4.5" y=".8" width="15" height="11" rx="4.500" fill="#ccc" stroke="#4a3428" stroke-width=".5"/><rect x=".8" y="8.800" width="22.400" height="20.600" rx="6.500" fill="#ddd" stroke="#4a3428" stroke-width=".5"/><ellipse cx="12" cy="19.200" rx="10.700" ry="10.200" fill="#fff" stroke="#4a3428" stroke-width=".7"/><text x="12" y="24" text-anchor="middle" font-size="14" font-weight="bold" fill="#fff" stroke="#555" stroke-width="1.900" paint-order="stroke" font-family="'Liberation Sans',sans-serif">2</text></svg><svg class="an" width="24" height="30" viewBox="0 0 24 30"><rect x="4.5" y=".8" width="15" height="11" rx="4.500" fill="#f3b0a0" stroke="#4a3428" stroke-width=".5"/><rect x=".8" y="8.800" width="22.400" height="20.600" rx="6.500" fill="#e9a080" stroke="#4a3428" stroke-width=".5"/><ellipse cx="12" cy="19.200" rx="10.700" ry="10.200" fill="#fff" stroke="#4a3428" stroke-width=".7"/><text x="12" y="24" text-anchor="middle" font-size="14" font-weight="bold" fill="#fff" stroke="#d9a088" stroke-width="1.900" paint-order="stroke" font-family="'Liberation Sans',sans-serif">4</text></svg></div><div class="xa"><a>跟投</a><a>反投</a><a>自动跟投</a></div><div class="xn">专家十五<i>胜率 47.62%</i></div><div class="xb"><div class="xl">第<br>四<br>球</div><svg class="an" width="24" height="30" viewBox="0 0 24 30"><rect x="5.5" y=".8" width="13" height="11" rx="4.500" fill="#f4f4f4" stroke="#4a3428" stroke-width=".5"/><rect x="10" y=".8" width="4" height="5" rx="2" fill="#333"/><rect x=".8" y="8.800" width="22.400" height="20.600" rx="6.500" fill="#f4f4f4" stroke="#4a3428" stroke-width=".5"/><ellipse cx="12" cy="19.200" rx="10.700" ry="10.200" fill="#fff" stroke="#4a3428" stroke-width=".7"/><text x="12" y="24" text-anchor="middle" font-size="14" font-weight="bold" fill="#fff" stroke="#444" stroke-width="1.900" paint-order="stroke" font-family="'Liberation Sans',sans-serif">3</text></svg><svg class="an" width="24" height="30" viewBox="0 0 24 30"><rect x="4.5" y=".8" width="15" height="11" rx="4.500" fill="#f6b9a6" stroke="#4a3428" stroke-width=".5"/><rect x="9.500" y="6" width="5" height="3" rx="1.500" fill="#e98a8a"/><rect x=".8" y="8.800" width="22.400" height="20.600" rx="6.500" fill="#f0a98f" stroke="#4a3428" stroke-width=".5"/><ellipse cx="12" cy="19.200" rx="10.700" ry="10.200" fill="#fff" stroke="#4a3428" stroke-width=".7"/><text x="12" y="24" text-anchor="middle" font-size="14" font-weight="bold" fill="#fff" stroke="#dba48c" stroke-width="1.900" paint-order="stroke" font-family="'Liberation Sans',sans-serif">6</text></svg></div><div class="xa"><a>跟投</a><a>反投</a><a>自动跟投</a></div><div class="xn">专家十八<i>胜率 19.05%</i></div><div class="xb"><div class="xl">第<br>三<br>球</div><svg class="an" width="24" height="30" viewBox="0 0 24 30"><rect x="4.5" y=".8" width="15" height="11" rx="4.500" fill="#f5a623" stroke="#4a3428" stroke-width=".5"/><circle cx="12" cy="4.200" r="1.500" fill="#6b3a1a"/><circle cx="7" cy="3" r="1.100" fill="#f08a8a"/><circle cx="17" cy="3" r="1.100" fill="#f08a8a"/><rect x=".8" y="8.800" width="22.400" height="20.600" rx="6.500" fill="#f5a623" stroke="#4a3428" stroke-width=".5"/><ellipse cx="12" cy="19.200" rx="10.700" ry="10.200" fill="#fff" stroke="#4a3428" stroke-width=".7"/><text x="12" y="24" text-anchor="middle" font-size="14" font-weight="bold" fill="#fff" stroke="#e8922a" stroke-width="1.900" paint-order="stroke" font-family="'Liberation Sans',sans-serif">5</text></svg><svg class="an" width="24" height="30" viewBox="0 0 24 30"><rect x="1.5" y=".8" width="21" height="11" rx="4.500" fill="#a9b0b8" stroke="#4a3428" stroke-width=".5"/><ellipse cx="3.800" cy="5.500" rx="1.600" ry="3.200" fill="#f7a8c0"/><ellipse cx="20.200" cy="5.500" rx="1.600" ry="3.200" fill="#f7a8c0"/><rect x="10.300" y="5.500" width="3.400" height="3.500" rx="1.500" fill="#333"/><rect x=".8" y="8.800" width="22.400" height="20.600" rx="6.500" fill="#a9b0b8" stroke="#4a3428" stroke-width=".5"/><ellipse cx="12" cy="19.200" rx="10.700" ry="10.200" fill="#fff" stroke="#4a3428" stroke-width=".7"/><text x="12" y="24" text-anchor="middle" font-size="14" font-weight="bold" fill="#fff" stroke="#8a9097" stroke-width="1.900" paint-order="stroke" font-family="'Liberation Sans',sans-serif">1</text></svg></div><div class="xa"><a>跟投</a><a>反投</a><a>自动跟投</a></div><div class="xt">16:04:19</div></div>
<div class="card" style="top:294px"><div class="chh"><span class="abs" style="left:7.200px">跟单计划 (极速赛车)</span><span class="abs" style="left:149.300px;font-size:12px">期数 33651925</span><svg class="abs" style="left:237px;top:11.500px" width="11" height="7" viewBox="0 0 11 7" fill="none" stroke="#fff" stroke-width="1.500"><path d="M1 1l4.500 4.500l4.500-4.500"/></svg></div><div class="cst"><b style="left:13.500px;width:57px">5码计划</b><span style="left:78.500px">6码计划</span><span style="left:135.500px">7码计划</span><span style="left:192.500px">8码计划</span></div><div class="xn">专家九<i>胜率 40.91%</i></div><div class="xb"><div class="xl">第<br>十<br>名</div><div class="sq" style="background:#4d4d4d;color:#fff">3</div><div class="sq" style="background:#760000;color:#fff">9</div><div class="sq" style="background:#e0e0e0;color:#f4f4f4">7</div><div class="sq" style="background:#ffff33;color:#fff">1</div><div class="sq" style="background:#81ffff;color:#fff">5</div></div><div class="xa"><a>跟投</a><a>反投</a><a>自动跟投</a></div><div class="xn">专家九<i>胜率 54.55%</i></div><div class="xb"><div class="xl">亚<br>军</div><div class="sq" style="background:#0a8bee;color:#fff">2</div><div class="sq" style="background:#e8102c;color:#fff">8</div><div class="sq" style="background:#4a23e0;color:#fff">6</div><div class="sq" style="background:#29b42e;color:#fff">10</div><div class="sq" style="background:#f87a20;color:#fff">4</div></div><div class="xa"><a>跟投</a><a>反投</a><a>自动跟投</a></div><div class="xt">16:04:19</div></div>
<div class="card" style="top:553.900px"><div class="chh"><span class="abs" style="left:7.200px">跟单计划 (极速快3)</span><span class="abs" style="left:149.300px;font-size:12px">期数 33640800</span><svg class="abs" style="left:237px;top:11.500px" width="11" height="7" viewBox="0 0 11 7" fill="none" stroke="#fff" stroke-width="1.500"><path d="M1 1l4.500 4.500l4.500-4.500"/></svg></div><div class="cst"><b style="left:96.500px;width:62px">大小计划</b></div><div class="xn">聊天室导师<i>胜率 54.55%</i></div><div class="xb"><div class="xl">大<br>小</div><div class="rb">大</div></div><div class="xa"><a>跟投</a><a>反投</a><a>自动跟投</a></div><div class="xn">专家九<i>胜率 63.64%</i></div><div class="xb"><div class="xl">大<br>小</div><div class="rb">大</div></div><div class="xa"><a>跟投</a><a>反投</a><a>自动跟投</a></div><div class="xt">16:04:19</div></div>
  </div>
  <div class="abs" style="left:335.800px;top:133px;width:8.200px;height:749px;background:#fff"></div>
  <div class="abs" style="left:336px;top:768px;width:8px;height:90px;border-radius:4px;background:#8a8a8a"></div>
  <div class="abs" style="left:335.500px;top:867px;width:0;height:0;border-left:4.500px solid transparent;border-right:4.500px solid transparent;border-top:5px solid #555"></div>

  <div id="chd">
    <svg class="abs" style="left:11px;top:8px" width="36" height="36" viewBox="0 0 36 36"><circle cx="16.200" cy="18.300" r="15" fill="#fcc800"/><circle cx="17" cy="15.800" r="15.500" fill="#bd090f"/><circle cx="16.900" cy="15.500" r="11.400" fill="#fff"/><circle cx="16.900" cy="15.500" r="10.200" fill="none" stroke="#bd090f" stroke-width=".5"/><text x="16.900" y="22" font-size="17" font-weight="bold" fill="#bd090f" text-anchor="middle" transform="skewX(-8)" style="transform-origin:17px 16px" font-family="'Liberation Sans','Noto Sans CJK SC',sans-serif">彩</text></svg>
    <div class="abs" style="left:38px;top:26px;width:39px;height:17px;border-radius:8.500px;background:#04487f"></div>
    <svg class="abs" style="left:40px;top:28px" width="13" height="13" viewBox="0 0 13 13"><circle cx="6.500" cy="6.500" r="4.300" fill="none" stroke="#fff" stroke-width="1.500"/><circle cx="6.500" cy="6.500" r="5.600" fill="none" stroke="#fff" stroke-width="1.600" stroke-dasharray="2.200 2.200"/><circle cx="6.500" cy="6.500" r="1.600" fill="#cfe0f0"/></svg>
    <span class="abs" style="left:53px;top:26px;font-size:11px;line-height:17px;white-space:nowrap">设置</span>
    <span class="abs" style="left:0;top:8px;width:347px;text-align:center;font-size:16px;line-height:22px">群聊</span>
    <span class="abs" style="left:0;top:31px;width:347px;text-align:center;font-size:10px;line-height:14px">1671人在线</span>
    <svg class="abs" style="left:284px;top:16px" width="18" height="18" viewBox="0 0 18 18" fill="none" stroke="#fff" stroke-width="1.600"><path d="M16.200 4.500v-2.700h-15.200v14.400h15.200v-2.700"/><path d="M6.500 9h10.500M13.500 5.500l3.500 3.500l-3.500 3.500"/></svg>
    <svg class="abs" style="left:318px;top:17px" width="16" height="16" viewBox="0 0 16 16" fill="none" stroke="#fff" stroke-width="1.800"><path d="M1.500 1.500l13 13M14.500 1.500l-13 13"/></svg>
  </div>
  <div id="ccd">距离13911584期投注截止倒计时 00:26</div>
  <div class="abs" style="left:148.800px;top:125px;width:49.700px;height:25px;border-radius:0 0 25px 25px;background:#f4f4f4;box-shadow:0 1px 4px rgba(120,80,40,.3)"><svg class="abs" style="left:20px;top:13px" width="10" height="6" viewBox="0 0 10 6" fill="none" stroke="#999" stroke-width="1.200"><path d="M.8 5.300l4.200-4.200l4.200 4.200"/></svg></div>
  <div id="clt">
    <div class="abs" style="left:10px;top:10px;width:40px;height:40px;border-radius:50%;border:1px solid #2a8ae0;background:#fff;box-shadow:0 2px 4px rgba(0,0,0,.2);overflow:hidden">
      <span class="abs" style="left:3px;top:9px;font-size:12px;line-height:14px;font-weight:bold;font-style:italic;color:#d7141a;letter-spacing:-1.500px;transform:rotate(-8deg);white-space:nowrap">11选</span>
      <span class="abs" style="left:24px;top:5px;font-size:22px;line-height:24px;font-weight:bold;font-style:italic;color:#f01018;transform:rotate(-6deg)">5</span>
      <span class="abs" style="left:8px;top:22px;font-size:6px;line-height:8px;font-weight:bold;font-style:italic;color:#d7141a;transform:rotate(-8deg);white-space:nowrap">极速</span>
    </div>
    <span class="abs" style="left:60px;top:6.500px;font-size:12px;line-height:19px;color:#333;white-space:nowrap">极速11选5</span>
    <span class="abs" style="left:121.500px;top:6.500px;font-size:10px;line-height:19px;color:#888;white-space:nowrap">13911583期</span>
    <div class="ball" style="left:60px">11</div><div class="ball" style="left:80.100px">03</div><div class="ball" style="left:100.200px">04</div><div class="ball" style="left:120.300px">07</div><div class="ball" style="left:140.400px">01</div>
    <div class="cbtn" style="top:4px">往期</div>
    <div class="cbtn" style="top:34px">切换</div>
  </div>
  
  <style>
  .tip{position:absolute;height:26px;background:#fff;border-radius:5px 0 0 5px;box-shadow:0 1px 4px rgba(0,0,0,.22);color:#2a86e2;font-size:12px;line-height:26px;text-align:right;padding-right:6px;white-space:nowrap}
  .xz{position:absolute;left:314px;width:30px;height:26px;background:#f89a36;color:#fff;font-size:12px;font-style:italic;line-height:26px;text-align:center;white-space:nowrap}
  .kf{position:absolute;left:283.400px;width:61px;height:26px;border-radius:13px 0 0 13px;background:#b9b9b9;color:#fff;font-size:12px;line-height:26px;padding-left:30px;box-shadow:0 1px 3px rgba(0,0,0,.2);white-space:nowrap}
  .kf svg{position:absolute;left:1px;top:1px}
  </style>
  <div class="tip" style="left:162px;top:161px;width:152px">总和大小 [总和小] 连开3期</div><div class="xz" style="top:161px">下注</div>
  <div class="tip" style="left:198px;top:195px;width:116px">第二球 [小] 连开2期</div><div class="xz" style="top:195px">下注</div>
  <div class="tip" style="left:198px;top:229px;width:116px">第三球 [小] 连开2期</div><div class="xz" style="top:229px">下注</div>
  <div class="kf" style="top:273px"><svg width="24" height="24" viewBox="0 0 24 24"><circle cx="12" cy="12" r="11.500" fill="#fff"/><path d="M6.500 14v-2.500a5.500 5.500 0 0 1 11 0v2.500" fill="none" stroke="#b9b9b9" stroke-width="1.200"/><rect x="5.500" y="12" width="2.600" height="5" rx="1.200" fill="#fff" stroke="#b9b9b9" stroke-width="1"/><rect x="15.900" y="12" width="2.600" height="5" rx="1.200" fill="#fff" stroke="#b9b9b9" stroke-width="1"/><path d="M17.200 17c0 1.800-1.500 2.500-4 2.500" fill="none" stroke="#b9b9b9" stroke-width="1"/></svg>客服</div>
  <div class="kf" style="top:308px"><svg width="24" height="24" viewBox="0 0 24 24"><circle cx="12" cy="12" r="11.500" fill="#fff"/><path d="M17.500 5l-5 7" fill="none" stroke="#b9b9b9" stroke-width="1.300"/><path d="M10.800 11l3.800 2.700c-1.200 3.500-4.500 5.500-9 4.800c2.500-1.500 4-4 5.200-7.500z" fill="none" stroke="#b9b9b9" stroke-width="1.100" stroke-linejoin="round"/><path d="M8.500 18.300l2-2.500M11 17.800l1.600-2.200" stroke="#b9b9b9" stroke-width=".8"/></svg>清屏</div>

  <div id="cin">
    <svg class="abs" style="left:11px;top:20px" width="18" height="18" viewBox="0 0 18 18" fill="none" stroke="#555" stroke-width="1.300"><circle cx="9" cy="9" r="7.800"/><path d="M9 4.800v8.400M4.800 9h8.400"/></svg>
    <div class="abs" style="left:38px;top:12.500px;width:235.500px;height:31px;border:1px solid #ddd;border-radius:15.500px;font-size:15px;color:#999;line-height:30px;padding-left:10px;white-space:nowrap">你尚未达到能发言的等级</div>
    <div class="abs" style="left:280.600px;top:13.500px;width:59px;height:29.500px;border-radius:15px;background:#a5c9f3;color:#fff;font-size:14px;line-height:30px;text-align:center">发送</div>
  </div>
</div>
</body>
</html>
